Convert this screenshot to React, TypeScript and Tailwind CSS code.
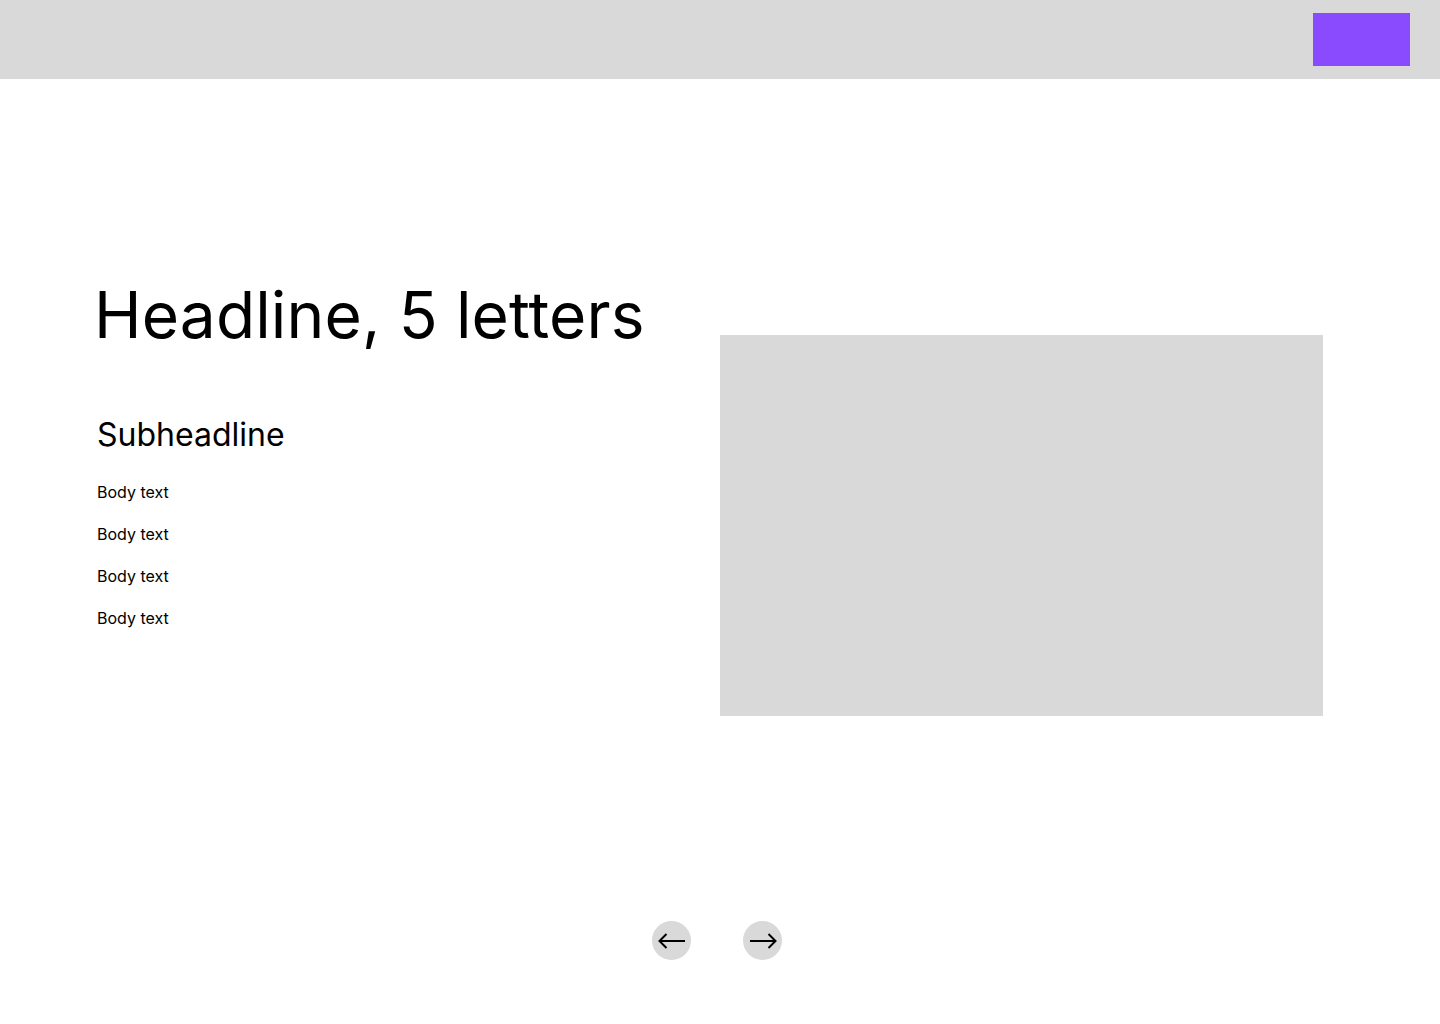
import type { ReactNode } from "react";

function ArrowButton({ children }: { children: ReactNode }) {
  return (
    <button className="flex h-[39px] w-[39px] items-center justify-center rounded-full bg-[#d9d9d9]">
      {children}
    </button>
  );
}

export default function App() {
  return (
    <div className="min-h-[1024px] w-full bg-white font-['Inter',sans-serif] text-black">
      {/* Top bar */}
      <header className="flex h-[79px] items-center justify-end bg-[#d9d9d9] pr-[30px]">
        <div className="h-[53px] w-[97px] bg-[#8a4bff]" />
      </header>

      {/* Hero */}
      <main className="flex items-start pt-[197px]">
        <div className="flex w-[720px] flex-col pl-[97px]">
          <h1 className="-ml-[3px] text-[64px] font-normal leading-[78px] tracking-[0.15px]">Headline, 5 letters</h1>
          <h2 className="mt-[61px] text-[32px] font-normal leading-[39px]">Subheadline</h2>
          <div className="mt-[28px] flex flex-col gap-[22px] text-[16px] leading-[20px]">
            <p>Body text</p>
            <p>Body text</p>
            <p>Body text</p>
            <p>Body text</p>
          </div>
        </div>
        <div className="mt-[59px] h-[381px] w-[603px] bg-[#d9d9d9]" />
      </main>

      {/* Pager */}
      <nav className="mt-[205px] flex justify-center gap-[52px] pr-[6px]">
        <ArrowButton>
          <svg width="28" height="16" viewBox="0 0 28 16" fill="none" stroke="black" strokeWidth={2}>
            <path d="M27 8H1.5" />
            <path d="M8.5 1L1.5 8l7 7" />
          </svg>
        </ArrowButton>
        <ArrowButton>
          <svg width="28" height="16" viewBox="0 0 28 16" fill="none" stroke="black" strokeWidth={2}>
            <path d="M1 8h25.5" />
            <path d="M19.5 1l7 7-7 7" />
          </svg>
        </ArrowButton>
      </nav>
    </div>
  );
}
